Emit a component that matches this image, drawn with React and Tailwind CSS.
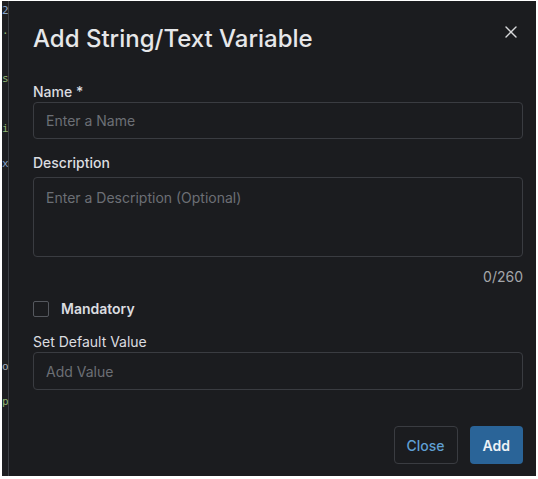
import { useState } from "react";

const editorChars = [
  { ch: "2", top: 4, color: "text-[#8aa4c8]" },
  { ch: ".", top: 24, color: "text-[#8fb573]" },
  { ch: "s", top: 72, color: "text-[#8fb573]" },
  { ch: "i", top: 122, color: "text-[#8fb573]" },
  { ch: "x", top: 157, color: "text-[#8aa4c8]" },
  { ch: "o", top: 360, color: "text-[#a9b0bb]" },
  { ch: "p", top: 395, color: "text-[#8fb573]" },
];

export default function App() {
  const [name, setName] = useState("");
  const [description, setDescription] = useState("");
  const [mandatory, setMandatory] = useState(false);
  const [value, setValue] = useState("");

  return (
    <div className="w-[538px] h-[479px] bg-white pl-[2px] pt-px pr-[2px] pb-[3px] font-['Inter','Noto_Sans',sans-serif]">
      <div className="flex h-full bg-[#1b1c1f]">
        {/* editor gutter peeking out behind the modal */}
        <div className="relative w-[6px] overflow-hidden bg-[#1e1f22] font-['DejaVu_Sans_Mono',monospace] text-[11px] leading-none">
          {editorChars.map((c) => (
            <span
              key={c.top}
              className={`absolute left-0 ${c.color}`}
              style={{ top: c.top }}
            >
              {c.ch}
            </span>
          ))}
        </div>
        <div className="w-px bg-[#3c3f44]" />

        <div className="flex-1 flex flex-col pl-[24px] pr-[13px] pt-[22px] pb-[12px]">
          <div className="flex items-start justify-between">
            <h1 className="text-[24px] leading-8 font-medium text-[#e6e7e9]">
              Add String/Text Variable
            </h1>
            <button className="mt-[3px] mr-[6px] text-[#d8d9db]">
              <svg width="12" height="12" viewBox="0 0 12 12" fill="none">
                <path
                  d="M1 1L11 11M11 1L1 11"
                  stroke="currentColor"
                  strokeWidth="1.4"
                  strokeLinecap="round"
                />
              </svg>
            </button>
          </div>

          <label className="mt-[27px] text-[14px] leading-5 font-medium text-[#dcdde0]">
            Name *
          </label>
          <input
            value={name}
            onChange={(e) => setName(e.target.value)}
            placeholder="Enter a Name"
            className="h-[37px] w-full rounded-[4px] border border-[#3a3c41] bg-transparent px-[12px] text-[14px] text-[#dcdde0] placeholder:text-[#6c6f75] outline-none"
          />

          <label className="mt-[14px] text-[14px] leading-5 font-medium text-[#dcdde0]">
            Description
          </label>
          <textarea
            value={description}
            onChange={(e) => setDescription(e.target.value)}
            placeholder="Enter a Description (Optional)"
            className="mt-[4px] h-[80px] w-full resize-none rounded-[4px] border border-[#3a3c41] bg-transparent px-[12px] py-[10px] text-[14px] leading-5 text-[#dcdde0] placeholder:text-[#6c6f75] outline-none"
          />
          <div className="mt-[10px] text-right text-[14px] leading-5 text-[#a4a6aa]">
            {description.length}/260
          </div>

          <label className="mt-[12px] flex items-center gap-[12px] cursor-pointer">
            <span
              onClick={() => setMandatory(!mandatory)}
              className="h-[16px] w-[16px] rounded-[2px] border border-[#55585e]"
            />
            <span className="text-[14px] leading-5 font-semibold text-[#dcdde0]">
              Mandatory
            </span>
          </label>

          <label className="mt-[13px] text-[14px] leading-5 text-[#dcdde0]">
            Set Default Value
          </label>
          <input
            value={value}
            onChange={(e) => setValue(e.target.value)}
            placeholder="Add Value"
            className="h-[38px] w-full rounded-[4px] border border-[#3a3c41] bg-transparent px-[12px] text-[14px] text-[#dcdde0] placeholder:text-[#6c6f75] outline-none"
          />

          <div className="mt-auto flex justify-end gap-[12px]">
            <button className="h-[38px] rounded-[4px] border border-[#3a3c41] px-[12px] text-[14px] font-medium text-[#5f9fd3]">
              Close
            </button>
            <button className="h-[38px] rounded-[4px] bg-[#2a6498] px-[13px] text-[14px] font-semibold text-[#eef2f6]">
              Add
            </button>
          </div>
        </div>
      </div>
    </div>
  );
}
